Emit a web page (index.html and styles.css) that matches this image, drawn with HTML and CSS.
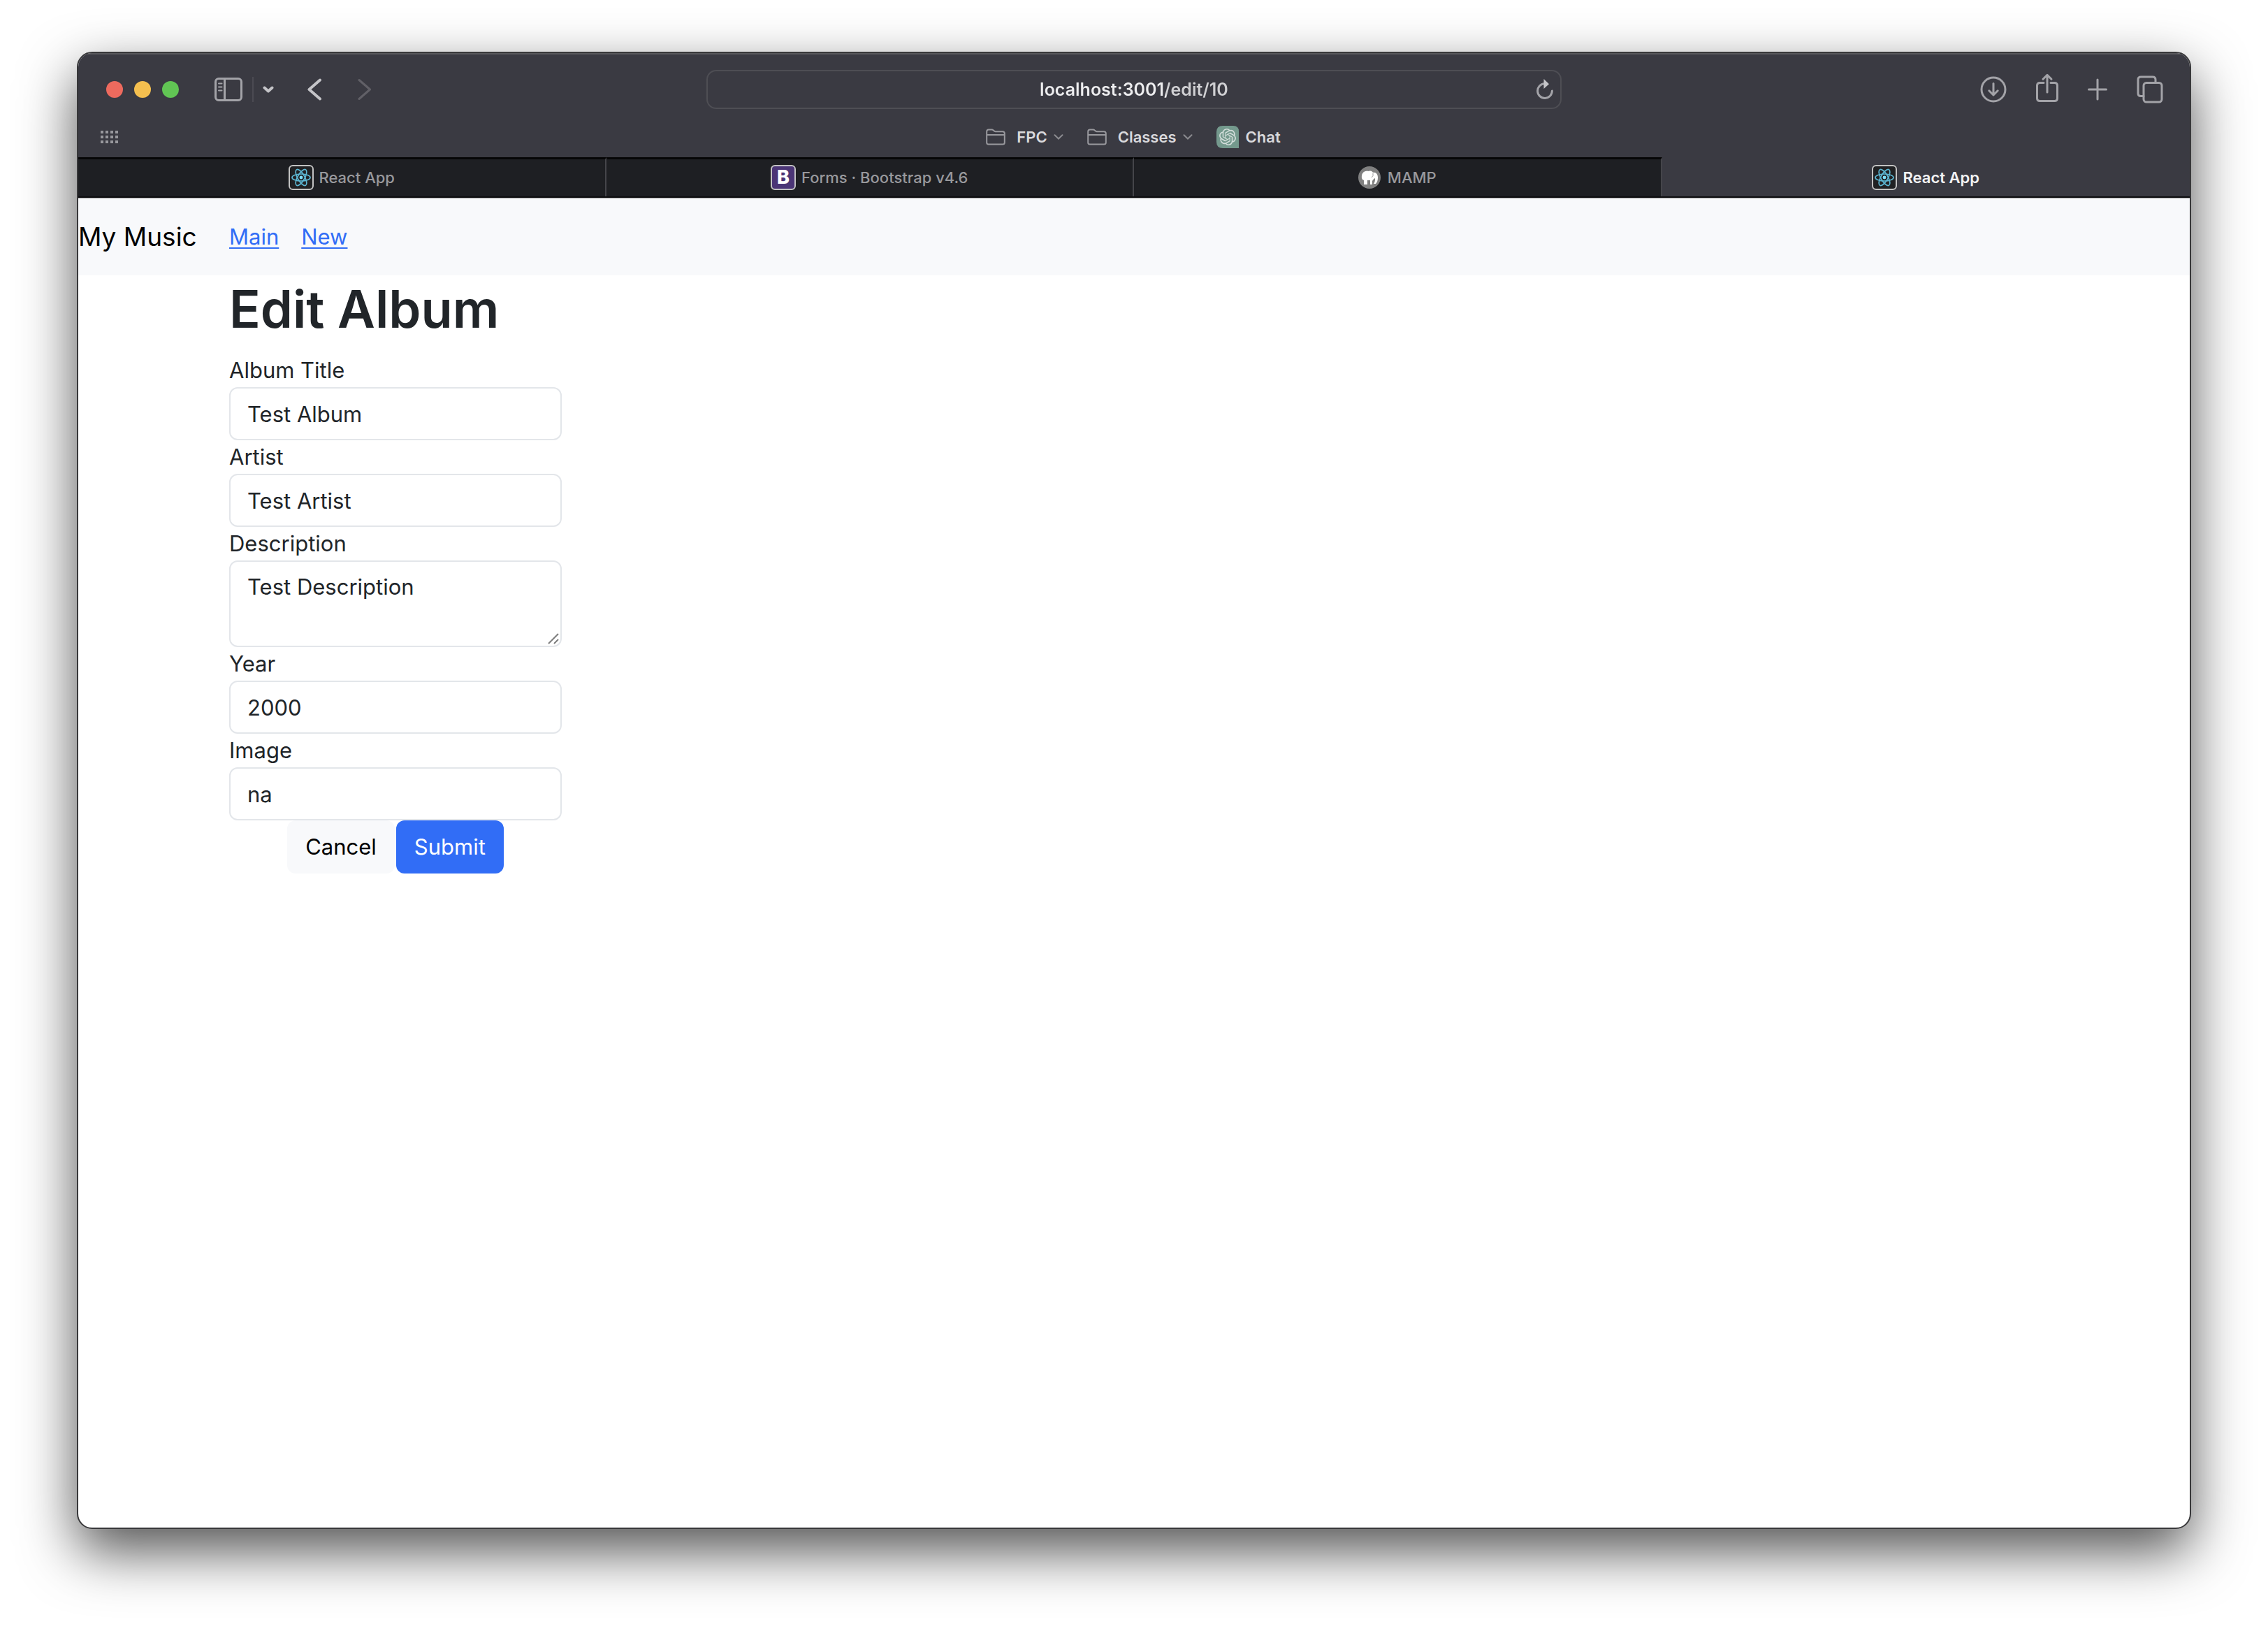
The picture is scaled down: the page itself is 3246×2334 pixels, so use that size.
FILE: index.html
```
<!DOCTYPE html>
<html lang="en">
<head>
<meta charset="utf-8">
<title>React App</title>
<link rel="stylesheet" href="styles.css">
</head>
<body>
<svg class="defs" width="0" height="0" aria-hidden="true">
  <symbol id="folder" viewBox="0 0 28 24">
    <path d="M1.2 20V4.5Q1.2 1.5 4 1.5h4.5q1.3 0 2.2.9l1.3 1.1q.8.7 2 .7H24q2.8 0 2.8 3V20q0 2.6-2.8 2.6H4Q1.2 22.6 1.2 20zM1.2 9h25.6"/>
  </symbol>
  <symbol id="chevron" viewBox="0 0 14 8"><path d="M1.5 1.2 7 6.5l5.5-5.300"/></symbol>
  <symbol id="react" viewBox="0 0 28 28">
    <circle cx="14" cy="14" r="2.4" fill="#7fe0fb" stroke="none"/>
    <g fill="none" stroke="#5cb6d2" stroke-width="1.7">
      <ellipse cx="14" cy="14" rx="13" ry="5"/>
      <ellipse cx="14" cy="14" rx="13" ry="5" transform="rotate(60 14 14)"/>
      <ellipse cx="14" cy="14" rx="13" ry="5" transform="rotate(120 14 14)"/>
    </g>
  </symbol>
</svg>
<div class="window">
  <header class="chrome">
    <div class="toolbar">
      <div class="tools-left">
        <div class="lights">
          <button class="light close" aria-label="Close"></button>
          <button class="light minimize" aria-label="Minimize"></button>
          <button class="light zoom" aria-label="Zoom"></button>
        </div>
        <button class="tool sidebar" aria-label="Show sidebar">
          <svg width="40" height="34" viewBox="0 0 40 34"><rect x="1.5" y="1.5" width="37" height="31" rx="4.5"/><path d="M14.5 1.5v31"/><path class="thin" d="M6 8.5h4.5M6 13.5h4.5M6 18.5h4.5"/></svg>
        </button>
        <button class="tool groups" aria-label="Tab groups">
          <svg width="16" height="10" viewBox="0 0 16 10"><path class="bold" d="M2.500 2.500l5.500 5 5.500-5"/></svg>
        </button>
        <button class="tool back" aria-label="Back">
          <svg width="20" height="32" viewBox="0 0 20 32"><path class="bold" d="M18 2.5 2.5 16 18 29.5"/></svg>
        </button>
        <button class="tool forward" aria-label="Forward" disabled>
          <svg width="20" height="32" viewBox="0 0 20 32"><path d="M2 2.5 17.5 16 2 29.5"/></svg>
        </button>
      </div>
      <div class="address">
        <input class="url" type="text" aria-label="Address" value="localhost:3001/edit/10">
        <button class="tool reload" aria-label="Reload">
          <svg width="24" height="30" viewBox="0 0 24 30"><path d="M11.5 6.7A10.4 10.4 0 1 0 22.4 17"/><path class="solid" d="M10.5 0 18 7.2 10.5 14z"/></svg>
        </button>
      </div>
      <div class="tools-right">
        <button class="tool" aria-label="Downloads">
          <svg width="38" height="38" viewBox="0 0 38 38"><circle cx="19" cy="19" r="17"/><path d="M19 10.5v16M12.8 20.8 19 27l6.2-6.2"/></svg>
        </button>
        <button class="tool" aria-label="Share">
          <svg class="share" width="32" height="42" viewBox="0 0 32 42"><path d="M11 13.5H5.5q-4 0-4 4v18q0 4 4 4h21q4 0 4-4v-18q0-4-4-4H21M16 27V2.5M10 8.3l6-6 6 6"/></svg>
        </button>
        <button class="tool" aria-label="New tab">
          <svg width="28" height="32" viewBox="0 0 28 32"><path d="M14 2v28M1.5 16h25"/></svg>
        </button>
        <button class="tool" aria-label="Tab overview">
          <svg width="38" height="40" viewBox="0 0 38 40"><rect x="10" y="10.5" width="26" height="27.5" rx="4"/><path d="M10 29.5H6q-4 0-4-4V6q0-4 4-4h17q4 0 4 4v4.500"/></svg>
        </button>
      </div>
    </div>
    <nav class="favorites" aria-label="Favorites">
      <button class="tool grid-button" aria-label="Show all favorites">
        <svg width="28" height="20" viewBox="0 0 28 20"><g class="dots"><path d="M2 3h25M2 10h25M2 17h25"/></g></svg>
      </button>
      <div class="bookmarks">
        <button class="bookmark"><svg class="folder" width="28" height="24"><use href="#folder"/></svg>FPC<svg class="chevron" width="14" height="8"><use href="#chevron"/></svg></button>
        <button class="bookmark"><svg class="folder" width="28" height="24"><use href="#folder"/></svg>Classes<svg class="chevron" width="14" height="8"><use href="#chevron"/></svg></button>
        <button class="bookmark chat">
          <svg width="32" height="32" viewBox="0 0 32 32"><path fill="#74998d" d="M9 0h15q8 0 8 8v24H9q-9 0-9-9V9q0-9 9-9z"/>
            <path fill="#d3dedb" transform="translate(4 4)" d="M22.2819 9.8211a5.9847 5.9847 0 0 0-.5157-4.9108 6.0462 6.0462 0 0 0-6.5098-2.9A6.0651 6.0651 0 0 0 4.9807 4.1818a5.9847 5.9847 0 0 0-3.9977 2.9 6.0462 6.0462 0 0 0 .7427 7.0966 5.98 5.98 0 0 0 .511 4.9107 6.051 6.051 0 0 0 6.5146 2.9001A5.9847 5.9847 0 0 0 13.2599 24a6.0557 6.0557 0 0 0 5.7718-4.2058 5.9894 5.9894 0 0 0 3.9977-2.9001 6.0557 6.0557 0 0 0-.7475-7.0729zm-9.022 12.6081a4.4755 4.4755 0 0 1-2.8764-1.0408l.1419-.0804 4.7783-2.7582a.7948.7948 0 0 0 .3927-.6813v-6.7369l2.02 1.1686a.071.071 0 0 1 .038.052v5.5826a4.504 4.504 0 0 1-4.4945 4.4944zm-9.6607-4.1254a4.4708 4.4708 0 0 1-.5346-3.0137l.142.0852 4.783 2.7582a.7712.7712 0 0 0 .7806 0l5.8428-3.3685v2.3324a.0804.0804 0 0 1-.0332.0615L9.74 19.9502a4.4992 4.4992 0 0 1-6.1408-1.6464zM2.3408 7.8956a4.485 4.485 0 0 1 2.3655-1.9728V11.6a.7664.7664 0 0 0 .3879.6765l5.8144 3.3543-2.0201 1.1685a.0757.0757 0 0 1-.071 0l-4.8303-2.7865A4.504 4.504 0 0 1 2.3408 7.872zm16.5963 3.8558L13.1038 8.364 15.1192 7.2a.0757.0757 0 0 1 .071 0l4.8303 2.7913a4.4944 4.4944 0 0 1-.6765 8.1042v-5.6772a.79.79 0 0 0-.407-.667zm2.0107-3.0231l-.142-.0852-4.7735-2.7818a.7759.7759 0 0 0-.7854 0L9.409 9.2297V6.8974a.0662.0662 0 0 1 .0284-.0615l4.8303-2.7866a4.4992 4.4992 0 0 1 6.6802 4.66zM8.3065 12.863l-2.02-1.1638a.0804.0804 0 0 1-.038-.0567V6.0742a4.4992 4.4992 0 0 1 7.3757-3.4537l-.142.0805L8.704 5.459a.7948.7948 0 0 0-.3927.6813zm1.0976-2.3654l2.602-1.4998 2.6069 1.4998v2.9994l-2.5974 1.4997-2.6067-1.4997Z"/></svg>Chat</button>
      </div>
    </nav>
    <div class="tabs" role="tablist">
      <button class="tab" role="tab"><span class="favicon"><svg width="28" height="28"><use href="#react"/></svg></span>React App</button>
      <button class="tab" role="tab"><span class="favicon bootstrap">B</span>Forms · Bootstrap v4.6</button>
      <button class="tab mamp" role="tab">
        <svg width="32" height="32" viewBox="0 0 32 32"><circle cx="16" cy="16" r="16" fill="#808080"/><path fill="#fff" d="M5 17C4 9 9 6 15 7c3-1 5 0 6 2 4-1 7 2 7 7 0 4-1 7-3 9h-3c2-3 2-5 2-8-2 1-3 2-4 4v5h-3v-6h-4v6H8v-6c-1.500-.5-2.500-1.500-3-3z"/><path d="M21 10q1 4-2 6" fill="none" stroke="#999" stroke-width="1"/></svg>MAMP</button>
      <button class="tab active" role="tab" aria-selected="true"><span class="favicon"><svg width="28" height="28"><use href="#react"/></svg></span>React App</button>
    </div>
  </header>
  <div class="page">
    <nav class="navbar">
      <span class="brand">My Music</span>
      <div class="links"><a href="#main">Main</a><a href="#new">New</a></div>
    </nav>
    <main class="container">
      <h1>Edit Album</h1>
      <form class="album-form">
        <label for="title">Album Title</label>
        <input class="control" id="title" type="text" value="Test Album">
        <label for="artist">Artist</label>
        <input class="control" id="artist" type="text" value="Test Artist">
        <label for="description">Description</label>
        <div class="area">
          <textarea class="control" id="description">Test Description</textarea>
          <svg class="grip" width="16" height="16" viewBox="0 0 16 16"><path d="M1 15 15 1M9 15l6-6"/></svg>
        </div>
        <label for="year">Year</label>
        <input class="control" id="year" type="text" value="2000">
        <label for="image">Image</label>
        <input class="control" id="image" type="text" value="na">
        <div class="actions">
          <button class="btn light-btn" type="button">Cancel</button>
          <button class="btn primary" type="submit">Submit</button>
        </div>
      </form>
    </main>
  </div>
</div>
</body>
</html>
```
FILE: styles.css
```
* { box-sizing: border-box; }

body {
  margin: 0;
  min-height: 100vh;
  padding: 74px 110px 146px;
  display: flex;
  flex-direction: column;
  background: #fff;
  font-family: Inter, "Liberation Sans", sans-serif;
  color: #212529;
}

button, input, textarea { font: inherit; margin: 0; }
button { border: 0; padding: 0; background: none; color: inherit; }

.defs { position: absolute; }

.window {
  flex: 1;
  display: flex;
  flex-direction: column;
  overflow: hidden;
  border: 2px solid #38383a;
  border-radius: 22px;
  background: #fff;
  box-shadow: 0 32px 80px rgba(0, 0, 0, .68);
}

/* Browser chrome */
.chrome {
  background: #3a3a42;
  border-bottom: 2px solid #0c0c0e;
  box-shadow: inset 0 2px #58585c;
}

.toolbar {
  display: grid;
  grid-template-columns: 1fr minmax(0, 1224px) 1fr;
  align-items: center;
  height: 104px;
}

.tools-left, .tools-right, .lights { display: flex; align-items: center; }
.tools-left { padding-left: 40px; }
.tools-right { justify-content: flex-end; gap: 42px; padding-right: 38px; }

.lights { gap: 16px; }
.light { width: 24px; height: 24px; border-radius: 50%; }
.close { background: #ed6a5e; }
.minimize { background: #f4bf4f; }
.zoom { background: #61c554; }

.tool { display: flex; }
.tool svg {
  fill: none;
  stroke: #a3a3a8;
  stroke-width: 3;
  stroke-linecap: round;
  stroke-linejoin: round;
}
.tool .share { margin-bottom: 4px; }
.tool .thin { stroke-width: 2; }
.tool .bold { stroke: #c4c4c8; stroke-width: 4; }
.tool .solid { fill: #c4c4c8; stroke: none; }
.tool:disabled svg { stroke: #616067; }
.tool .dots { stroke: #98989d; stroke-width: 4; stroke-linecap: butt; stroke-dasharray: 4 3; }

.sidebar { margin-left: 51px; }
.groups {
  height: 36px;
  margin-left: 14px;
  padding-left: 13px;
  align-items: center;
  border-left: 2px solid #4b4a52;
}
.back { margin-left: 48px; }
.forward { margin-left: 52px; }

.address {
  display: flex;
  align-items: center;
  height: 56px;
  padding: 0 10px 0 34px;
  border: 2px solid #4e4e54;
  border-radius: 14px;
}
.url {
  flex: 1;
  min-width: 0;
  border: 0;
  padding: 0;
  text-align: center;
  font-size: 25px;
  font-weight: 600;
  color: transparent;
  background: linear-gradient(90deg, #ededef 54%, #d0d0d3 54%) text;
}

.favorites {
  display: grid;
  grid-template-columns: 1fr auto 1fr;
  align-items: center;
  height: 45px;
  padding: 0 32px 15px 30px;
}
.bookmarks { display: flex; align-items: center; gap: 34px; }
.bookmark {
  display: flex;
  align-items: center;
  font-size: 22px;
  font-weight: 600;
  line-height: 32px;
  color: #d9d9dc;
}
.folder {
  margin-right: 16px;
  fill: none;
  stroke: #99999e;
  stroke-width: 2;
}
.chevron {
  margin-left: 9px;
  fill: none;
  stroke: #8a8a8f;
  stroke-width: 2;
  stroke-linecap: round;
}
.chat { gap: 10px; }

.tabs { display: grid; grid-template-columns: repeat(4, 1fr); height: 56px; }
.tab {
  display: flex;
  align-items: center;
  justify-content: center;
  gap: 8px;
  min-width: 0;
  padding-bottom: 2px;
  border-top: 3px solid #060607;
  border-right: 2px solid #45454a;
  background: #1e1f23;
  font-size: 22px;
  font-weight: 500;
  color: #98989c;
}
.mamp { gap: 10px; }
.active {
  border-top-color: transparent;
  border-right: 0;
  background: none;
  font-weight: 600;
  color: #f2f2f3;
}
.favicon {
  display: flex;
  align-items: center;
  justify-content: center;
  width: 36px;
  height: 36px;
  border: 2px solid #c2c2c2;
  border-radius: 6px;
  background: #202123;
}
.bootstrap {
  background: #4b3576;
  color: #fff;
  font-size: 27px;
  font-weight: 800;
}

/* Page */
.page { flex: 1; font-size: 31px; line-height: 48px; border-top: 1px solid #a9a9ab; }

.navbar {
  display: flex;
  align-items: center;
  height: 110px;
  background: #f8f9fb;
}
.brand { width: 216px; font-size: 37px; color: #000; }
.links { display: flex; gap: 32px; }
.links a { color: #316df6; text-underline-offset: 4px; text-decoration-thickness: 2px; }

.container { padding-left: 216px; }
h1 { margin: 0 0 16px; font-size: 74px; line-height: 96px; font-weight: 600; }

.album-form { display: flex; flex-direction: column; width: 476px; }
.control {
  display: block;
  width: 100%;
  height: 76px;
  padding: 12px 24px;
  border: 2px solid #e3e6ea;
  border-radius: 12px;
  background: #fff;
  color: #212529;
}
.area { position: relative; }
textarea.control { height: 124px; resize: none; }
.grip {
  position: absolute;
  right: 4px;
  bottom: 4px;
  stroke: #7d7d7d;
  stroke-width: 2;
}

.actions { display: flex; justify-content: center; gap: 2px; }
.btn { height: 76px; padding: 0 26px; border-radius: 12px; }
.light-btn { background: #f8f9fb; color: #000; }
.primary { background: #316df6; color: #fff; }
```
